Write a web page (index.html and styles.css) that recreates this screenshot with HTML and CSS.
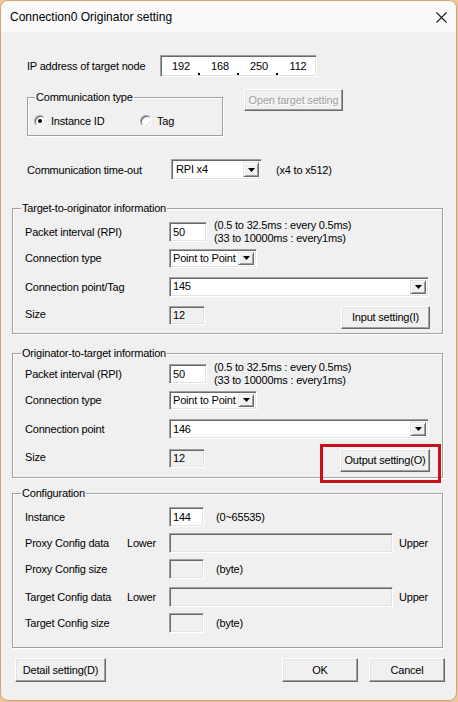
FILE: index.html
```html
<!DOCTYPE html>
<html lang="en">
<head>
<meta charset="utf-8">
<title>Connection0 Originator setting</title>
<link rel="stylesheet" href="styles.css">
</head>
<body>
<div class="window">
  <div class="titlebar">
    <span class="title">Connection0 Originator setting</span>
    <svg class="close" width="11" height="11" viewBox="0 0 11 11"><path d="M0.5 0.5 L10.5 10.5 M10.5 0.5 L0.5 10.5" stroke="#1c1c1c" stroke-width="1.1" fill="none"/></svg>
  </div>

  <div class="ip-row">
    <span class="ip-label">IP address of target node</span>
    <div class="field ip-box">
      <span class="octet">192</span><span class="ipdot"></span>
      <span class="octet">168</span><span class="ipdot"></span>
      <span class="octet">250</span><span class="ipdot"></span>
      <span class="octet">112</span>
    </div>
  </div>

  <div class="commtype-row">
    <div class="group commtype">
      <span class="group-title">Communication type</span>
      <div class="radios">
        <div class="radio-item first"><span class="radio checked"></span><span>Instance ID</span></div>
        <div class="radio-item"><span class="radio"></span><span>Tag</span></div>
      </div>
    </div>
    <div class="btn btn-open disabled">Open target setting</div>
  </div>

  <div class="timeout-row">
    <span class="timeout-label">Communication time-out</span>
    <div class="field combo timeout-combo"><span class="combo-text">RPI x4</span><span class="dd"><svg width="7" height="4" viewBox="0 0 7 4"><path d="M0 0h7L3.5 4z" fill="#000"/></svg></span></div>
    <span class="timeout-note">(x4 to x512)</span>
  </div>

  <div class="group info to">
    <span class="group-title">Target-to-originator information</span>
    <div class="row r-rpi">
      <span class="lbl">Packet interval (RPI)</span>
      <div class="field num">50</div>
      <div class="notes"><span>(0.5 to 32.5ms : every 0.5ms)</span><span>(33 to 10000ms : every1ms)</span></div>
    </div>
    <div class="row r-type">
      <span class="lbl">Connection type</span>
      <div class="field combo type-combo"><span class="combo-text">Point to Point</span><span class="dd"><svg width="7" height="4" viewBox="0 0 7 4"><path d="M0 0h7L3.5 4z" fill="#000"/></svg></span></div>
    </div>
    <div class="row r-point">
      <span class="lbl">Connection point/Tag</span>
      <div class="field combo point-combo"><span class="combo-text">145</span><span class="dd"><svg width="7" height="4" viewBox="0 0 7 4"><path d="M0 0h7L3.5 4z" fill="#000"/></svg></span></div>
    </div>
    <div class="row r-size">
      <span class="lbl size-lbl">Size</span>
      <div class="field ro size-box">12</div>
      <div class="btn set-btn">Input setting(I)</div>
    </div>
  </div>

  <div class="group info ot">
    <span class="group-title">Originator-to-target information</span>
    <div class="row r-rpi">
      <span class="lbl">Packet interval (RPI)</span>
      <div class="field num">50</div>
      <div class="notes"><span>(0.5 to 32.5ms : every 0.5ms)</span><span>(33 to 10000ms : every1ms)</span></div>
    </div>
    <div class="row r-type">
      <span class="lbl">Connection type</span>
      <div class="field combo type-combo"><span class="combo-text">Point to Point</span><span class="dd"><svg width="7" height="4" viewBox="0 0 7 4"><path d="M0 0h7L3.5 4z" fill="#000"/></svg></span></div>
    </div>
    <div class="row r-point">
      <span class="lbl">Connection point</span>
      <div class="field combo point-combo"><span class="combo-text">146</span><span class="dd"><svg width="7" height="4" viewBox="0 0 7 4"><path d="M0 0h7L3.5 4z" fill="#000"/></svg></span></div>
    </div>
    <div class="row r-size">
      <span class="lbl size-lbl">Size</span>
      <div class="field ro size-box">12</div>
      <div class="btn set-btn out-btn">Output setting(O)</div>
    </div>
    <div class="highlight"></div>
  </div>

  <div class="group config">
    <span class="group-title">Configuration</span>
    <div class="row c-row">
      <span class="lbl">Instance</span>
      <div class="field small-box">144</div>
      <span class="c-note">(0~65535)</span>
    </div>
    <div class="row c-row">
      <span class="lbl short">Proxy Config data</span>
      <span class="lower">Lower</span>
      <div class="field ro data-box"></div>
      <span class="upper">Upper</span>
    </div>
    <div class="row c-row">
      <span class="lbl">Proxy Config size</span>
      <div class="field ro small-box"></div>
      <span class="c-note">(byte)</span>
    </div>
    <div class="row c-row gap8">
      <span class="lbl short">Target Config data</span>
      <span class="lower">Lower</span>
      <div class="field ro data-box"></div>
      <span class="upper">Upper</span>
    </div>
    <div class="row c-row">
      <span class="lbl">Target Config size</span>
      <div class="field ro small-box"></div>
      <span class="c-note">(byte)</span>
    </div>
  </div>

  <div class="bottom-row">
    <div class="btn detail-btn">Detail setting(D)</div>
    <div class="btn ok-btn">OK</div>
    <div class="btn cancel-btn">Cancel</div>
  </div>
</div>
</body>
</html>
```

FILE: styles.css
```css
* { box-sizing: border-box; }

html, body {
  margin: 0;
  padding: 0;
  background: #eec49a;
}

.window {
  width: 457px;
  height: 701px;
  border: 1px solid #d9a36c;
  border-radius: 8px;
  background: #f0f0f0;
  overflow: hidden;
  font-family: "Liberation Sans", Arial, sans-serif;
  font-size: 11px;
  letter-spacing: -0.2px;
  color: #000;
}

/* title bar */
.titlebar {
  height: 31px;
  background: #fafafa;
  display: flex;
  align-items: center;
  justify-content: space-between;
  padding: 0 9px 0 9px;
}
.title {
  font-size: 12px;
  letter-spacing: 0;
  color: #000;
}
.close { display: block; margin-top: 1px; }

/* common controls */
.field {
  background: #fff;
  border: 1px solid;
  border-color: #a0a0a0 #fff #fff #a0a0a0;
  box-shadow: inset 1px 1px 0 #696969, inset -1px -1px 0 #e3e3e3;
  display: flex;
  align-items: center;
  padding-left: 3px;
  line-height: 13px;
}
.field.ro { background: #f0f0f0; }

.combo { padding: 2px 2px 2px 3px; }
.combo-text { flex: 1; }
.dd {
  width: 16px;
  height: 100%;
  background: #f0f0f0;
  border: 1px solid;
  border-color: #e3e3e3 #696969 #696969 #e3e3e3;
  box-shadow: inset 1px 1px 0 #fff, inset -1px -1px 0 #a0a0a0;
  display: flex;
  align-items: center;
  justify-content: center;
}
.dd svg { display: block; }

.btn {
  display: flex;
  align-items: center;
  justify-content: center;
  background: #f0f0f0;
  border: 1px solid;
  border-color: #fff #696969 #696969 #fff;
  box-shadow: inset -1px -1px 0 #a0a0a0, inset 1px 1px 0 #e3e3e3;
  line-height: 13px;
}
.btn.disabled {
  color: #a0a0a0;
  text-shadow: 1px 1px 0 #fff;
}

.group {
  position: relative;
  border: 1px solid #a0a0a0;
  box-shadow: 1px 1px 0 #fff, inset 1px 1px 0 #fff;
}
.group-title {
  position: absolute;
  top: -8px;
  left: 8px;
  line-height: 14px;
  padding: 0 1px;
  background: #f0f0f0;
  white-space: nowrap;
}

/* IP row */
.ip-row {
  display: flex;
  align-items: center;
  height: 22px;
  margin-top: 23px;
  padding-left: 26px;
}
.ip-label { width: 133px; }
.ip-box {
  width: 157px;
  height: 22px;
  padding-left: 5px;
  align-items: flex-start;
  padding-top: 4px;
}
.octet {
  width: 30px;
  text-align: center;
  line-height: 12px;
}
.ipdot {
  width: 9px;
  height: 15px;
  position: relative;
  display: flex;
  align-items: flex-end;
  justify-content: flex-start;
  padding-left: 2px;
}
.ipdot::before {
  content: "";
  width: 2px;
  height: 2px;
  background: #000;
}

/* communication type */
.commtype-row {
  display: flex;
  align-items: flex-start;
  margin-top: 12px;
  padding-left: 26px;
}
.group.commtype {
  margin-top: 8px;
  width: 196px;
  height: 39px;
  padding: 17px 0 0 6px;
}
.commtype .group-title { left: 7px; }
.radios { display: flex; align-items: center; height: 12px; }
.radio-item { display: flex; align-items: center; }
.radio-item.first { width: 106px; }
.radio {
  width: 12px;
  height: 12px;
  border-radius: 50%;
  border: 1px solid;
  border-color: #a0a0a0 #fff #fff #a0a0a0;
  background: #fff;
  box-shadow: inset 1px 1px 0 #696969, inset -1px -1px 0 #e3e3e3;
  margin-right: 5px;
  display: flex;
  align-items: center;
  justify-content: center;
}
.radio.checked::after {
  content: "";
  width: 4px;
  height: 4px;
  border-radius: 50%;
  background: #000;
}
.btn-open {
  margin-left: 21px;
  width: 99px;
  height: 22px;
}

/* time-out */
.timeout-row {
  display: flex;
  align-items: center;
  margin-top: 23px;
  padding-left: 26px;
  height: 21px;
}
.timeout-label { width: 144px; }
.timeout-combo { width: 91px; height: 21px; }
.timeout-combo .combo-text { padding-left: 1px; }
.timeout-note { margin-left: 14px; }

/* information groups */
.group.info {
  margin-left: 11px;
  width: 431px;
  padding: 10px 12px 4px 12px;
}
.group.to { margin-top: 28px; }
.group.ot { margin-top: 19px; padding-top: 7px; padding-bottom: 5px; }

.row { display: flex; align-items: center; }
.lbl { width: 144px; flex: none; }
.r-rpi { height: 26px; }
.r-type { height: 20px; margin-top: 3px; }
.r-point { height: 21px; margin-top: 8px; }
.r-size { height: 23px; margin-top: 9px; align-items: flex-start; }
.ot .r-point { height: 20px; margin-top: 9px; }
.ot .r-size { margin-top: 10px; }

.num { width: 38px; height: 20px; }
.notes {
  display: flex;
  flex-direction: column;
  margin-left: 7px;
  line-height: 13px;
}
.type-combo { width: 88px; height: 19px; }
.point-combo { width: 260px; height: 20px; }
.size-lbl { line-height: 16px; }
.size-box { width: 36px; height: 19px; }
.set-btn { margin-left: auto; width: 89px; height: 23px; }
.out-btn { width: 90px; }

.highlight {
  position: absolute;
  left: 307px;
  top: 90px;
  width: 121px;
  height: 39px;
  border: 3px solid #c8101a;
}

/* configuration */
.group.config {
  margin-top: 15px;
  margin-left: 11px;
  width: 431px;
  padding: 13px 12px 14px 12px;
}
.c-row { height: 20px; margin-top: 6px; }
.c-row:first-of-type { margin-top: 0; }
.c-row.gap8 { margin-top: 8px; }
.lbl.short { width: 102px; }
.lower { width: 42px; }
.small-box { width: 35px; height: 20px; }
.data-box { width: 224px; height: 20px; }
.c-note { margin-left: 12px; }
.upper { margin-left: 6px; }

/* bottom buttons */
.bottom-row {
  display: flex;
  margin-top: 10px;
  padding-left: 14px;
}
.detail-btn { width: 91px; height: 24px; }
.ok-btn { width: 76px; height: 24px; margin-left: 176px; }
.cancel-btn { width: 76px; height: 24px; margin-left: 11px; }
```
